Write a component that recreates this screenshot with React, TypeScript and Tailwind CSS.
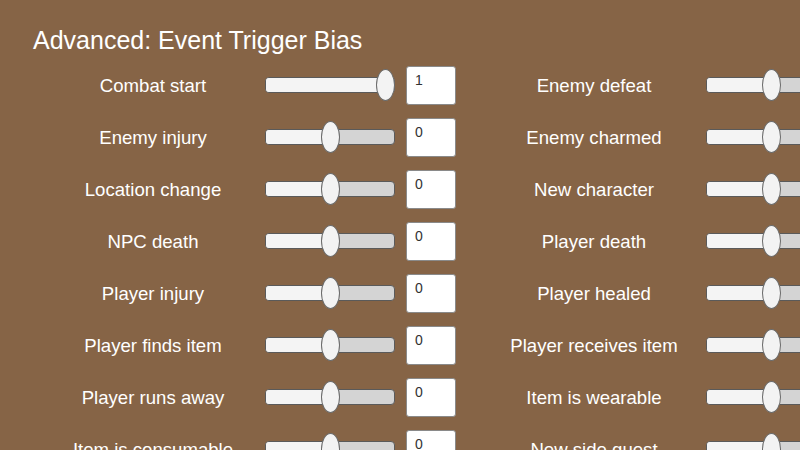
import React from 'react';

type Bias = { label: string; value: number; amount: string };

const leftColumn: Bias[] = [
  { label: 'Combat start', value: 1, amount: '1' },
  { label: 'Enemy injury', value: 0.5, amount: '0' },
  { label: 'Location change', value: 0.5, amount: '0' },
  { label: 'NPC death', value: 0.5, amount: '0' },
  { label: 'Player injury', value: 0.5, amount: '0' },
  { label: 'Player finds item', value: 0.5, amount: '0' },
  { label: 'Player runs away', value: 0.5, amount: '0' },
  { label: 'Item is consumable', value: 0.5, amount: '0' },
];

const rightColumn: Bias[] = [
  { label: 'Enemy defeat', value: 0.5, amount: '0' },
  { label: 'Enemy charmed', value: 0.5, amount: '0' },
  { label: 'New character', value: 0.5, amount: '0' },
  { label: 'Player death', value: 0.5, amount: '0' },
  { label: 'Player healed', value: 0.5, amount: '0' },
  { label: 'Player receives item', value: 0.5, amount: '0' },
  { label: 'Item is wearable', value: 0.5, amount: '0' },
  { label: 'New side quest', value: 0.5, amount: '0' },
];

function Slider({ value }: { value: number }) {
  // thumb stays inside the track: 130px track, 19px thumb
  const thumbLeft = value * (130 - 19);
  return (
    <div className="relative w-[130px] h-[34px] shrink-0 flex items-center">
      <div className="relative w-full h-[16px] rounded-[4px] border border-[#5a5a5a] bg-[#d4d4d4] overflow-hidden">
        <div className="h-full bg-[#f4f4f4]" style={{ width: thumbLeft + 9 }} />
      </div>
      <div
        className="absolute top-[1px] w-[19px] h-[32px] rounded-[50%] border border-[#6a6a6a] bg-[#f3f3f3]"
        style={{ left: thumbLeft }}
      />
    </div>
  );
}

function BiasRow({ item }: { item: Bias }) {
  return (
    <div className="flex items-center h-[52px]">
      <div className="w-[224px] shrink-0 pt-[2px] text-center text-[18.6px] leading-none text-white">{item.label}</div>
      <Slider value={item.value} />
      <div className="ml-[11px] w-[50px] h-[39px] shrink-0 rounded-[3px] border border-[#8a8a8a] bg-white pl-[8px] pt-[5px] text-[14px] leading-[16px] text-[#323232]">
        {item.amount}
      </div>
    </div>
  );
}

export default function App() {
  return (
    <main
      className="w-[800px] h-[450px] overflow-hidden bg-[#866446]"
      style={{ fontFamily: '"Liberation Sans", Arial, sans-serif' }}
    >
      <h1 className="pl-[33px] pt-[28px] text-[25px] leading-[25px] text-white font-normal">
        Advanced: Event Trigger Bias
      </h1>
      <div className="mt-[6px] ml-[41px] flex gap-[26px] w-[1000px]">
        <div className="flex flex-col">
          {leftColumn.map((item) => (
            <BiasRow key={item.label} item={item} />
          ))}
        </div>
        <div className="flex flex-col">
          {rightColumn.map((item) => (
            <BiasRow key={item.label} item={item} />
          ))}
        </div>
      </div>
    </main>
  );
}
